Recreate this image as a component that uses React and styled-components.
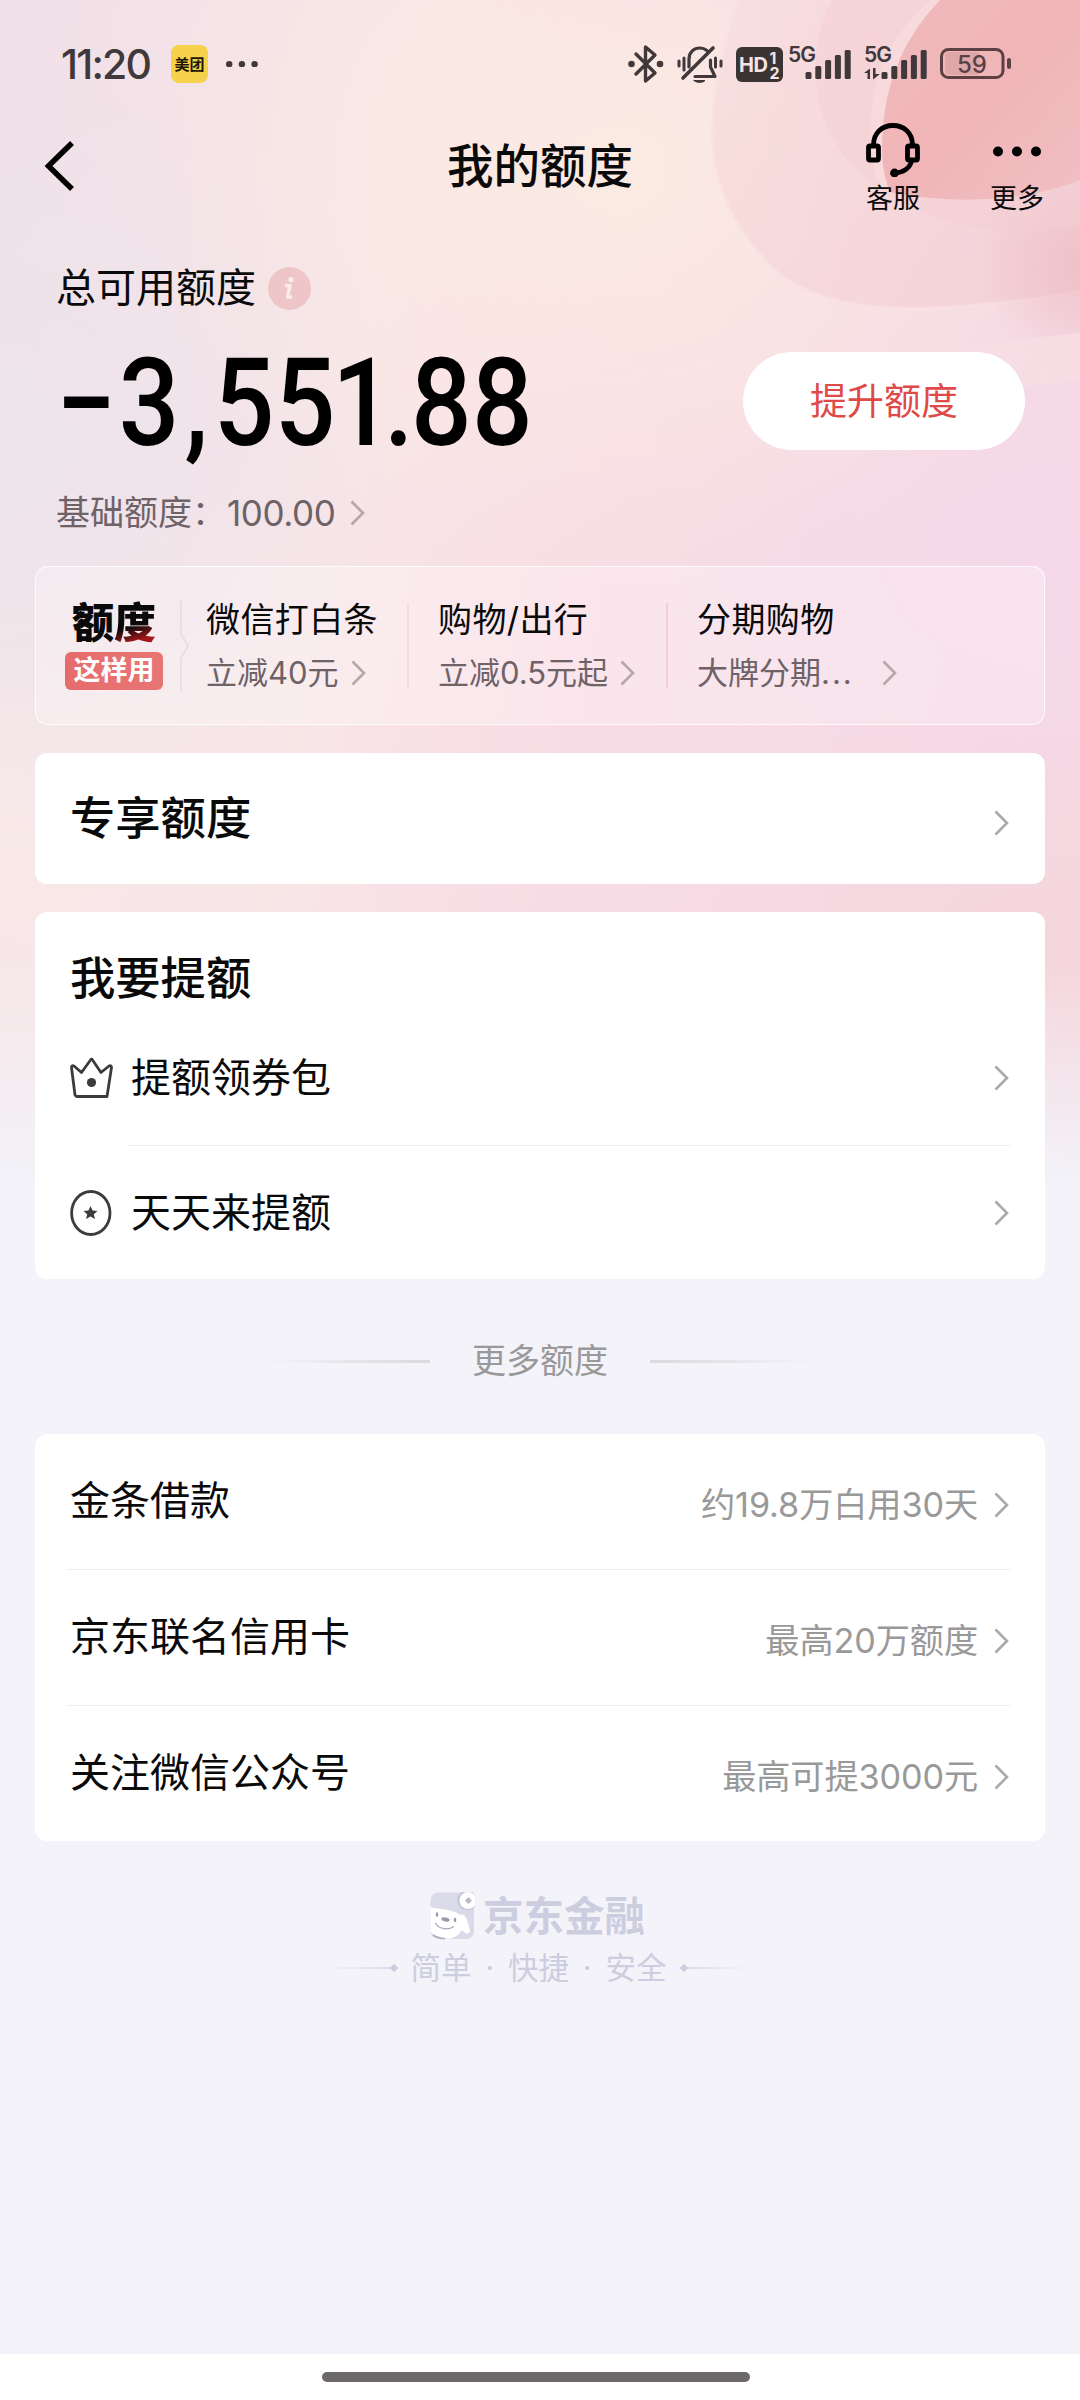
import React from "react";
import styled, { createGlobalStyle } from "styled-components";

const colors = {
  ink: "#0b0a0b",
  status: "#40383a",
  muted: "#6f6267",
  gray: "#999",
  brand: "#cdcde0",
  red: "#df4a48",
  page: "#f3f3f9",
};

const GlobalStyle = createGlobalStyle`
  * {
    box-sizing: border-box;
  }

  body {
    margin: 0;
    background: ${colors.page};
    font-family: Inter, "Noto Sans CJK SC", sans-serif;
    color: ${colors.ink};
    line-height: 1;
  }
`;

const Page = styled.main`
  position: relative;
  display: flex;
  flex-direction: column;
  width: 1080px;
  height: 2400px;
  overflow: hidden;
  background:
    linear-gradient(to bottom, rgba(243, 243, 249, 0) 960px, ${colors.page} 1190px),
    radial-gradient(ellipse 480px 420px at 620px 170px, #fbebe2 0%, rgba(251, 235, 226, 0) 100%),
    radial-gradient(ellipse 420px 400px at 0px 450px, #ede4ec 0%, rgba(237, 228, 236, 0) 100%),
    radial-gradient(ellipse 400px 420px at 0px 820px, #f9e9e8 0%, rgba(249, 233, 232, 0) 100%),
    radial-gradient(ellipse 400px 260px at 1060px 560px, #f5d9ea 0%, rgba(245, 217, 234, 0) 100%),
    radial-gradient(ellipse 420px 300px at 1080px 980px, #f5d5db 0%, rgba(245, 213, 219, 0) 100%),
    linear-gradient(100deg, #f0e0e8 0px, #f8e5e7 420px, #f8dce5 700px, #f5d9e4 1100px);
`;

/* Decorative swirl behind the header */
const Swirl = styled.svg`
  position: absolute;
  top: 0;
  right: 0;
`;

const StatusBar = styled.header`
  position: relative;
  display: flex;
  justify-content: space-between;
  align-items: center;
  height: 104px;
  padding: 24px 68px 0 61px;
  color: ${colors.status};
`;

const StatusGroup = styled.div`
  display: flex;
  align-items: center;
  gap: ${(props) => props.$gap || 0}px;
`;

const Clock = styled.span`
  width: 110px;
  font-size: 41px;
  font-weight: 500;
  letter-spacing: -1.8px;
`;

const AppBadge = styled.span`
  display: grid;
  place-items: center;
  width: 37px;
  height: 38px;
  margin-right: 18px;
  border-radius: 8px;
  background: #f6d14a;
  color: #1d1606;
  font-size: 15px;
  font-weight: 700;
`;

const NavBar = styled.nav`
  position: relative;
  display: grid;
  grid-template-columns: 1fr auto 1fr;
  align-items: center;
  height: 122px;
  padding: 2px 36px 0;

  & > svg {
    margin-left: 8px;
  }
`;

const NavTitle = styled.h1`
  margin: 0;
  font-size: 46.5px;
  font-weight: 500;
`;

const NavActions = styled.div`
  display: flex;
  justify-content: flex-end;
  gap: 70px;
`;

const NavAction = styled.div`
  display: flex;
  flex-direction: column;
  align-items: center;
  gap: 8px;
  padding-top: 2px;
  font-size: 27px;
`;

const Summary = styled.section`
  position: relative;
  height: 340px;
  padding: 0 55px 0 56px;
`;

const SummaryTitle = styled.div`
  display: flex;
  align-items: center;
  gap: 12px;
  height: 124px;
  font-size: 40px;
`;

const AmountRow = styled.div`
  display: flex;
  justify-content: space-between;
  align-items: center;
  height: 102px;
`;

const Amount = styled.strong`
  padding-top: 6px;
  color: #000;
  font-family: Roboto, sans-serif;
  font-size: 122px;
  font-weight: 500;
  letter-spacing: 0.5px;
  transform: scaleX(0.875);
  transform-origin: left center;
  white-space: nowrap;
`;

/* Digit pair spacing of the large amount */
const Kern = styled.span`
  letter-spacing: ${(props) => props.$by}px;
`;

const RaiseButton = styled.button`
  width: 282px;
  height: 98px;
  padding: 0;
  border: 0;
  border-radius: 49px;
  background: #fff;
  color: ${colors.red};
  font: 400 37px Inter, "Noto Sans CJK SC", sans-serif;
  line-height: 1;
`;

const BaseRow = styled.div`
  display: flex;
  align-items: center;
  height: 114px;
  padding-top: 8px;
  color: ${colors.muted};
  font-size: 34px;

  b {
    width: 124px;
    padding-left: 1px;
    font-size: 35px;
    font-weight: 400;
    letter-spacing: -0.4px;
  }
`;

const Promo = styled.section`
  position: relative;
  display: flex;
  align-items: center;
  height: 159px;
  margin: 0 35px;
  border: 1.5px solid rgba(255, 255, 255, 0.8);
  border-radius: 13px;
  background: rgba(255, 255, 255, 0.28);
`;

const PromoLogo = styled.div`
  display: flex;
  flex-direction: column;
  align-items: center;
  gap: 8px;
  width: 98px;
  margin: 0 16px 0 29px;
  padding-top: 1px;

  strong {
    font-size: 42px;
    font-weight: 900;
  }

  strong span {
    background: linear-gradient(165deg, #0b0a0b 55%, #a3161a 80%);
    background-clip: text;
    color: transparent;
  }

  em {
    width: 98px;
    height: 38px;
    border-radius: 6px;
    background: linear-gradient(90deg, #e66c6c, #e87575);
    color: #fff;
    font-size: 27px;
    font-style: normal;
    font-weight: 700;
    line-height: 38px;
    text-align: center;
  }
`;

const PromoItem = styled.div`
  display: flex;
  flex-direction: column;
  justify-content: space-between;
  height: 85px;
  width: ${(props) => props.$width}px;
  margin-left: ${(props) => props.$left}px;
  border-right: 2px solid ${(props) => props.$line || "transparent"};
  font-size: 34px;
  letter-spacing: 0.4px;

  div {
    display: flex;
    align-items: center;
    color: ${colors.muted};
    font-size: 31px;
    letter-spacing: 0;
    white-space: nowrap;
  }

  div span {
    letter-spacing: 2px;
  }

  svg {
    margin-left: ${(props) => props.$gap || 12}px;
  }
`;

const Card = styled.section`
  position: relative;
  margin: ${(props) => props.$top || 0}px 35px 0;
  padding: 0 36px 0 35px;
  border-radius: 12px;
  background: #fff;
`;

const CardHeading = styled.div`
  display: flex;
  justify-content: space-between;
  align-items: center;
  height: ${(props) => props.$height}px;
  font-size: 45.3px;
  font-weight: 500;

  svg {
    margin-top: 8px;
  }
`;

const Row = styled.div`
  display: flex;
  align-items: center;
  height: ${(props) => props.$height}px;
  margin-bottom: ${(props) => props.$after || 0}px;
  font-size: 40px;
`;

const RowBody = styled.div`
  display: flex;
  flex: 1;
  justify-content: space-between;
  align-items: center;
`;

const RowNote = styled.span`
  display: flex;
  align-items: center;
  gap: 16px;
  padding-top: 7px;
  color: ${colors.gray};
  font-size: 34.2px;
  letter-spacing: -0.1px;
`;

const Divider = styled.hr`
  height: 1px;
  margin: 0 -2px 0 ${(props) => props.$left}px;
  border: 0;
  background: #ececee;
`;

const SectionLabel = styled.div`
  position: relative;
  display: flex;
  justify-content: center;
  align-items: center;
  gap: 42px;
  height: 155px;
  padding-top: 9px;
  color: ${colors.gray};
  font-size: 34px;
`;

const Fade = styled.i`
  width: ${(props) => props.$width}px;
  height: ${(props) => props.$thick}px;
  background: linear-gradient(
    ${(props) => (props.$flip ? "to left" : "to right")},
    transparent,
    ${(props) => props.$color}
  );
`;

const Footer = styled.footer`
  position: relative;
  flex: 1;
  padding-top: 51px;
  color: ${colors.brand};
`;

const Brand = styled.div`
  display: flex;
  justify-content: center;
  gap: 8px;
  height: 47px;
  padding-right: 5px;
  font-size: 40.5px;
  font-weight: 700;
  line-height: 50px;
`;

const Slogan = styled.div`
  display: flex;
  justify-content: center;
  align-items: center;
  height: 40px;
  margin-top: 9px;
  padding-right: 3px;
  font-size: 30.5px;

  p {
    display: flex;
    justify-content: space-between;
    width: 256px;
    margin: 0 14px;
  }
`;

const Diamond = styled.i`
  width: 6px;
  height: 6px;
  background: ${colors.brand};
  transform: rotate(45deg);
`;

const HomeBar = styled.div`
  position: relative;
  display: flex;
  justify-content: center;
  height: 46px;
  padding: 18px 8px 0 0;
  background: #fff;

  &::after {
    content: "";
    width: 428px;
    height: 10px;
    border-radius: 5px;
    background: #6d686b;
  }
`;

const Chevron = ({ color = "#a9a9a9" }) => (
  <svg width="15" height="26" viewBox="0 0 15 26" fill="none" stroke={color} strokeWidth="2.6">
    <path d="M1.5 1.5 L13 13 L1.5 24.5" />
  </svg>
);

const SwirlArt = () => (
  <Swirl width="400" height="420" viewBox="680 0 400 420">
    <defs>
      <linearGradient id="disc" x1="0" y1="0" x2="1" y2="1">
        <stop offset="0" stopColor="#f1b9bc" />
        <stop offset="0.5" stopColor="#f0b5b7" />
        <stop offset="1" stopColor="#f1bfc3" />
      </linearGradient>
      <linearGradient id="ring" x1="0" y1="0" x2="1" y2="0.6">
        <stop offset="0" stopColor="#f8e0e0" />
        <stop offset="0.3" stopColor="#f5d3d6" stopOpacity="0.7" />
        <stop offset="1" stopColor="#f2cdd3" stopOpacity="0.9" />
      </linearGradient>
      <radialGradient id="corner" cx="1080" cy="265" r="100" gradientUnits="userSpaceOnUse">
        <stop offset="0" stopColor="#eebdc2" />
        <stop offset="1" stopColor="#eebdc2" stopOpacity="0" />
      </radialGradient>
      <linearGradient id="band" x1="0" y1="0" x2="1" y2="0">
        <stop offset="0" stopColor="#f8dfe5" stopOpacity="0" />
        <stop offset="1" stopColor="#f7dde3" />
      </linearGradient>
    </defs>
    <path d="M738 0 C724 50 712 85 712 140 C716 190 734 230 775 270 C830 318 930 316 1080 292 V0 Z" fill="url(#ring)" opacity="0.75" />
    <path d="M738 0 C724 50 712 85 712 140 C716 190 734 230 775 270 C830 318 930 316 1080 292" fill="none" stroke="#f9e1e4" strokeWidth="3" opacity="0.7" />
    <circle cx="1080" cy="265" r="100" fill="url(#corner)" opacity="0.8" />
    <path d="M832 0 C806 50 812 110 840 150 C870 195 960 250 1080 225 V0 Z" fill="#f4cfd3" opacity="0.45" />
    <path d="M930 0 C880 45 860 100 876 178 L888 192 C878 120 895 50 948 0 Z" fill="#f8dcdf" opacity="0.75" />
    <path d="M940 0 C900 42 882 90 882 150 C882 168 886 182 890 192 C960 206 1030 200 1080 180 V0 Z" fill="url(#disc)" />
    <path d="M850 347 C930 352 1010 340 1080 333 V380 C1010 392 930 392 850 347 Z" fill="url(#band)" />
  </Swirl>
);

const BluetoothIcon = () => (
  <svg width="36" height="40" viewBox="0 0 36 40" fill="none" stroke="currentColor" strokeWidth="3.4" strokeLinejoin="round" strokeLinecap="round">
    <path d="M8 10 L27 29 L17.5 37 V3 L27 11 L8 30" />
    <circle cx="3.5" cy="20" r="1.6" fill="currentColor" />
    <circle cx="32" cy="20" r="1.6" fill="currentColor" />
  </svg>
);

const MutedBellIcon = () => (
  <svg width="46" height="40" viewBox="0 0 46 40" fill="none" stroke="currentColor" strokeWidth="3.2" strokeLinecap="round">
    <path d="M12 23 V15 C12 8 17 4 23 4 C25.5 4 28 5 30 6.5" />
    <path d="M33.5 16 V23 L38 32.5 H18" strokeLinejoin="round" />
    <path d="M6 34 L36 4" strokeWidth="3.6" />
    <path d="M17 36.5 H28 C26 39 19 39 17 36.5 Z" fill="currentColor" strokeWidth="1" />
    <path d="M2 17 V22 M7 14 V26 M38.5 14 V23 M44 17 V22" strokeWidth="3" />
  </svg>
);

const HdIcon = () => (
  <svg width="47" height="35" viewBox="0 0 47 35">
    <rect width="47" height="35" rx="6" fill="#3b3434" />
    <g fill="#f6e3e5" fontFamily="Inter, sans-serif" fontWeight="700">
      <text x="3" y="25" fontSize="20" textLength="29">HD</text>
      <text x="33.5" y="16.5" fontSize="16">1</text>
      <text x="33.5" y="31.5" fontSize="16">2</text>
    </g>
  </svg>
);

const SignalIcon = ({ data }) => (
  <svg width="63" height="50" viewBox="0 -6 63 50" fill="currentColor">
    <text x="0" y="16.5" fontSize="21" fontWeight="600" fontFamily="Inter, sans-serif" textLength="28">5G</text>
    {data && <path d="M0 28 L6 23.5 V34 H3.5 V28 Z M9 23 H11.5 V29 L16 29 L9 34.5 Z" />}
    {[7, 13, 19, 24, 29].map((h, i) => (
      <rect key={h} x={17.5 + i * 9.8} y={34 - h} width="6" height={h} rx="1.5" />
    ))}
  </svg>
);

const BatteryIcon = () => (
  <svg width="72" height="32" viewBox="0 0 72 32">
    <rect x="5" y="4" width="35" height="23" rx="4" fill="#cf9a9d" opacity="0.55" />
    <rect x="1.5" y="1.5" width="61.5" height="28" rx="7" fill="none" stroke="#5c4043" strokeWidth="3" />
    <rect x="67" y="10" width="4" height="11" rx="2" fill="#5c4043" />
    <text x="32" y="24.5" fontSize="24" fontWeight="500" fontFamily="Inter, sans-serif" fill="#5a4144" textAnchor="middle">59</text>
  </svg>
);

const Dots = ({ r, step }) => (
  <svg width={step * 2 + r * 2} height={r * 2} fill="currentColor">
    {[0, 1, 2].map((i) => (
      <circle key={i} cx={r + i * step} cy={r} r={r} />
    ))}
  </svg>
);

const BackIcon = () => (
  <svg width="32" height="52" viewBox="0 0 32 52" fill="none" stroke="#000" strokeWidth="5.5">
    <path d="M28 3 L4.5 26 L28 49" />
  </svg>
);

const HeadsetIcon = () => (
  <svg width="54" height="54" viewBox="0 0 54 54" fill="none" stroke="#000" strokeWidth="4.8">
    <path d="M7.5 22 C7.5 10 16 2.5 27 2.5 C38 2.5 46.5 10 46.5 22" />
    <rect x="2.5" y="23" width="10" height="14" rx="1.5" />
    <rect x="41.5" y="23" width="10" height="14" rx="1.5" />
    <path d="M45.5 38 C44 45 37 50 28.5 50" />
    <circle cx="28.5" cy="50" r="2" />
  </svg>
);

const MoreIcon = () => (
  <svg width="48" height="54" fill="#000">
    <circle cx="5" cy="28.5" r="5" />
    <circle cx="24" cy="28.5" r="5" />
    <circle cx="43" cy="28.5" r="5" />
  </svg>
);

const InfoIcon = () => (
  <svg width="43" height="43" viewBox="0 0 43 43">
    <circle cx="21.5" cy="21.5" r="21.5" fill="#efc6c8" />
    <circle cx="23" cy="12.5" r="2.6" fill="#fbebeb" />
    <path d="M17 18.5 H22 L19.5 30 H24" fill="none" stroke="#fbebeb" strokeWidth="3.4" strokeLinejoin="round" />
  </svg>
);

const CrownIcon = () => (
  <svg width="61" height="42" viewBox="0 0 61 42" fill="none" stroke="#3c3c3e" strokeWidth="2.8" strokeLinejoin="round">
    <path d="M6.5 39.5 H37 L41.5 10.5 Q41.5 8 39 9 L31 15.5 L22.5 3 Q21.5 1.5 20.5 3 L11.5 15.5 L4 9 Q1.5 8 1.5 10.5 L5 38 Z" />
    <circle cx="21.5" cy="25.5" r="4.6" fill="#3c3c3e" stroke="none" />
  </svg>
);

const StarIcon = () => (
  <svg width="61" height="46" viewBox="0 0 61 46">
    <ellipse cx="20.8" cy="23" rx="19.2" ry="21.5" fill="none" stroke="#3c3c3e" strokeWidth="2.8" />
    <path d="M20.5 16 L22.6 20.6 L27.5 21 L23.8 24.3 L25 29 L20.5 26.5 L16 29 L17.2 24.3 L13.5 21 L18.4 20.6 Z" fill="#3c3c3e" />
  </svg>
);

const NotchDivider = () => (
  <svg width="12" height="92" viewBox="0 0 12 92" fill="none" stroke="#efd8dc" strokeWidth="1.5">
    <path d="M2 0 V34 L9 46 L2 58 V92" />
  </svg>
);

const MascotIcon = () => (
  <svg width="45" height="48" viewBox="0 0 45 48">
    <rect x="0.5" y="0.5" width="43.5" height="46.5" rx="8" fill="#dadae8" />
    <path d="M0.5 15 C8 18 22 16 30 23 C35 21 37 26 40 39 C39 43 35 42 32 38 C28 45 20 48 14 46 C6 44 0.5 42 0.5 38 Z" fill="#fff" />
    <circle cx="37" cy="8.5" r="10" fill="#c9c9dc" />
    <circle cx="38" cy="8.5" r="8.5" fill="#fff" />
    <rect x="36" y="6" width="5" height="5" fill="#b9b9cc" transform="rotate(45 38.5 8.5)" />
    <ellipse cx="7" cy="22.5" rx="1.3" ry="2.3" fill="#9a9aae" />
    <ellipse cx="25" cy="28" rx="1.3" ry="2.3" fill="#9a9aae" />
    <ellipse cx="15.5" cy="27.5" rx="4.2" ry="2" fill="#9a9aae" transform="rotate(15 15.5 27.5)" />
    <path d="M5.5 31 C9 38 19 38 24 34.5" fill="none" stroke="#a5a5b8" strokeWidth="1.2" />
    <path d="M3 43 C6 45 10 46.5 15 46.5" fill="none" stroke="#b0b0c2" strokeWidth="1.6" />
  </svg>
);

const raiseRows = [
  { label: "提额领券包", icon: <CrownIcon />, height: 66, after: 34 },
  { label: "天天来提额", icon: <StarIcon />, height: 133 },
];

const moreRows = [
  { label: "金条借款", note: "约19.8万白用30天" },
  { label: "京东联名信用卡", note: "最高20万额度" },
  { label: "关注微信公众号", note: "最高可提3000元" },
];

const App = () => {
  return (
    <>
      <GlobalStyle />
      <Page>
        <SwirlArt />
        <StatusBar>
          <StatusGroup>
            <Clock>11:20</Clock>
            <AppBadge>美团</AppBadge>
            <Dots r={3.2} step={12.7} />
          </StatusGroup>
          <StatusGroup $gap={13}>
            <StatusGroup $gap={5}>
              <StatusGroup $gap={13}>
                <BluetoothIcon />
                <MutedBellIcon />
                <HdIcon />
              </StatusGroup>
              <SignalIcon />
            </StatusGroup>
            <SignalIcon data />
            <BatteryIcon />
          </StatusGroup>
        </StatusBar>

        <NavBar>
          <BackIcon />
          <NavTitle>我的额度</NavTitle>
          <NavActions>
            <NavAction>
              <HeadsetIcon />
              客服
            </NavAction>
            <NavAction>
              <MoreIcon />
              更多
            </NavAction>
          </NavActions>
        </NavBar>

        <Summary>
          <SummaryTitle>
            总可用额度
            <InfoIcon />
          </SummaryTitle>
          <AmountRow>
            <Amount>
              <Kern $by={3}>−</Kern>
              <Kern $by={6}>3,</Kern>5<Kern $by={-4}>5</Kern>
              <Kern $by={-10}>1</Kern>
              <Kern $by={-3}>.</Kern>88
            </Amount>
            <RaiseButton>提升额度</RaiseButton>
          </AmountRow>
          <BaseRow>
            基础额度：
            <b>100.00</b>
            <Chevron color="#b5a6ab" />
          </BaseRow>
        </Summary>

        <Promo>
          <PromoLogo>
            <strong>
              额<span>度</span>
            </strong>
            <em>这样用</em>
          </PromoLogo>
          <NotchDivider />
          <PromoItem $left={15} $width={203} $line="#f1dfe5">
            微信打白条
            <div>
              立减40元
              <Chevron color="#b5a6ab" />
            </div>
          </PromoItem>
          <PromoItem $left={29} $width={230} $line="#f7cdd4">
            购物/出行
            <div>
              立减0.5元起
              <Chevron color="#b5a6ab" />
            </div>
          </PromoItem>
          <PromoItem $left={29} $width={240} $gap={28}>
            分期购物
            <div>
              大牌分期<span>...</span>
              <Chevron color="#b5a6ab" />
            </div>
          </PromoItem>
        </Promo>

        <Card $top={28}>
          <CardHeading $height={131}>
            专享额度
            <Chevron />
          </CardHeading>
        </Card>

        <Card $top={28}>
          <CardHeading $height={133}>我要提额</CardHeading>
          {raiseRows.map((row, idx) => (
            <React.Fragment key={row.label}>
              {idx > 0 && <Divider $left={58} />}
              <Row $height={row.height} $after={row.after}>
                {row.icon}
                <RowBody>
                  {row.label}
                  <Chevron />
                </RowBody>
              </Row>
            </React.Fragment>
          ))}
        </Card>

        <SectionLabel>
          <Fade $width={166} $thick={3} $color="#dadadc" />
          更多额度
          <Fade $width={166} $thick={3} $color="#dadadc" $flip />
        </SectionLabel>

        <Card>
          {moreRows.map((row, idx) => (
            <React.Fragment key={row.label}>
              {idx > 0 && <Divider $left={-3} />}
              <Row $height={135}>
                <RowBody>
                  {row.label}
                  <RowNote>
                    {row.note}
                    <Chevron />
                  </RowNote>
                </RowBody>
              </Row>
            </React.Fragment>
          ))}
        </Card>

        <Footer>
          <Brand>
            <MascotIcon />
            京东金融
          </Brand>
          <Slogan>
            <Fade $width={64} $thick={2} $color="#dcdce9" />
            <Diamond />
            <p>
              <span>简单</span>
              <span>·</span>
              <span>快捷</span>
              <span>·</span>
              <span>安全</span>
            </p>
            <Diamond />
            <Fade $width={64} $thick={2} $color="#dcdce9" $flip />
          </Slogan>
        </Footer>
        <HomeBar />
      </Page>
    </>
  );
};

export default App;
